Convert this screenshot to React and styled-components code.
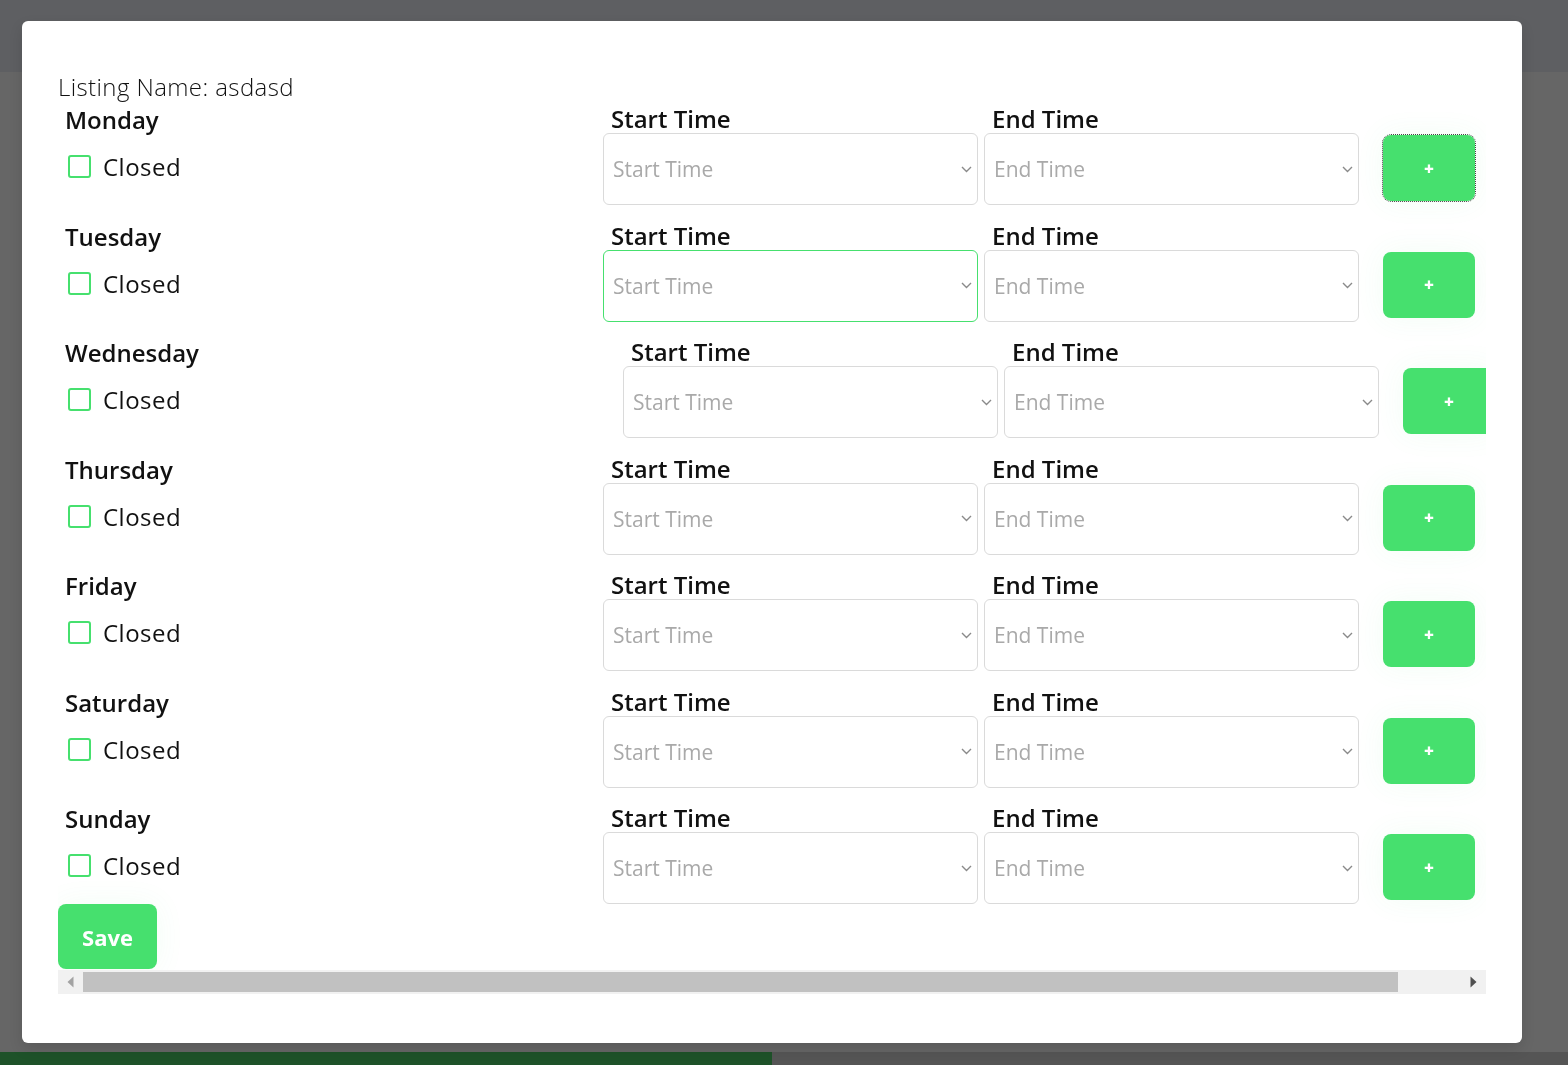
import React from 'react'
import styled, { createGlobalStyle } from 'styled-components'

const GlobalStyle = createGlobalStyle`
  *{
    margin: 0;
    padding: 0;
    box-sizing: border-box;
  }
  body{
    font-family: "Open Sans", "Liberation Sans", sans-serif;
    color: #111;
    background: #666;
  }
`

const days = [
  { name: 'Monday', focusBtn: true },
  { name: 'Tuesday', focusStart: true },
  { name: 'Wednesday', shift: true },
  { name: 'Thursday' },
  { name: 'Friday' },
  { name: 'Saturday' },
  { name: 'Sunday' },
]

const Chevron = () => (
  <svg width="11" height="7" viewBox="0 0 11 7" fill="none">
    <path d="M1 1l4.5 4.5L10 1" stroke="#8a8a8a" strokeWidth="1.4" />
  </svg>
)

const Arrow = ({ dir, color }) => (
  <svg width="7" height="12" viewBox="0 0 7 12">
    <path d={dir === 'left' ? 'M6.5 0.5L0.5 6l6 5.5z' : 'M0.5 0.5L6.5 6l-6 5.5z'} fill={color} />
  </svg>
)

const TimeSelect = ({ label, active }) => (
  <TimeField>
    <FieldLabel>{label}</FieldLabel>
    <SelectBox $active={active}>
      <Select defaultValue="">
        <option value="" disabled>{label}</option>
        <option>08:00</option>
        <option>09:00</option>
      </Select>
      <Chevron />
    </SelectBox>
  </TimeField>
)

const App = () => {
  return (
    <>
      <GlobalStyle />
      <Page>
        <Header />
        <Main />
        <Footer>
          <Progress />
        </Footer>
      </Page>
      <Overlay>
        <Modal>
          <ListingName>Listing Name: asdasd</ListingName>
          <Scroller>
            <Rows>
              {days.map((d) => (
                <Row key={d.name}>
                  <DayCell $shift={d.shift}>
                    <DayName>{d.name}</DayName>
                    <CheckLine>
                      <Check type="checkbox" />
                      <span>Closed</span>
                    </CheckLine>
                  </DayCell>
                  <TimeSelect label="Start Time" active={d.focusStart} />
                  <TimeSelect label="End Time" />
                  <AddButton $focused={d.focusBtn}>+</AddButton>
                </Row>
              ))}
            </Rows>
            <SaveButton>Save</SaveButton>
          </Scroller>
          <ScrollBar>
            <ScrollButton>
              <Arrow dir="left" color="#a3a3a3" />
            </ScrollButton>
            <ScrollTrack>
              <ScrollThumb />
            </ScrollTrack>
            <ScrollButton>
              <Arrow dir="right" color="#505050" />
            </ScrollButton>
          </ScrollBar>
        </Modal>
      </Overlay>
    </>
  )
}

const Page = styled.div`
  height: 100vh;
  display: flex;
  flex-direction: column;
`

const Header = styled.div`
  height: 72px;
  background: #5e5f62;
`

const Main = styled.div`
  flex: 1;
  background: #666;
`

const Footer = styled.div`
  height: 13px;
  background: #555;
`

const Progress = styled.div`
  width: 772px;
  height: 100%;
  background: #1e5229;
`

const Overlay = styled.div`
  position: fixed;
  inset: 0;
  padding: 21px 0 0 22px;
`

const Modal = styled.div`
  width: 1500px;
  height: 1022px;
  background: #fff;
  border-radius: 6px;
  box-shadow: 0 6px 14px rgba(0, 0, 0, 0.12);
  padding: 51px 36px 0 36px;
`

const ListingName = styled.div`
  font-size: 24px;
  line-height: 29px;
  font-weight: 300;
  letter-spacing: 0.4px;
  color: #111;
`

const Scroller = styled.div`
  margin-top: -2px;
  padding-top: 5px;
  width: 1428px;
  overflow: hidden;
`

const Rows = styled.div`
  display: flex;
  flex-direction: column;
  gap: 15.5px;
`

const Row = styled.div`
  display: flex;
  align-items: flex-start;
  width: max-content;
`

const DayCell = styled.div`
  width: ${(p) => (p.$shift ? '565px' : '545px')};
  padding-left: 7px;
  display: flex;
  flex-direction: column;
  gap: 18px;
  padding-top: 1px;
`

const DayName = styled.div`
  font-size: 24px;
  line-height: 29px;
  font-weight: 600;
`

const CheckLine = styled.label`
  display: flex;
  align-items: center;
  gap: 12px;
  padding-left: 3px;
  font-size: 24px;
  line-height: 29px;
  letter-spacing: 0.5px;
`

const Check = styled.input`
  appearance: none;
  width: 23px;
  height: 23px;
  border: 2px solid #46e06e;
  border-radius: 3px;
  background: #fff;
`

const TimeField = styled.div`
  width: 375px;
  margin-right: 6px;
  &:nth-of-type(3){
    margin-right: 0;
  }
`

const FieldLabel = styled.div`
  font-size: 24px;
  line-height: 29px;
  font-weight: 600;
  padding-left: 8px;
`

const SelectBox = styled.div`
  height: 72px;
  display: flex;
  align-items: center;
  padding: 0 5px 0 9px;
  border: 1px solid ${(p) => (p.$active ? '#46e06e' : '#dadada')};
  border-radius: 6px;
  background: #fff;
`

const Select = styled.select`
  flex: 1;
  appearance: none;
  border: none;
  outline: none;
  background: transparent;
  font-family: inherit;
  font-size: 21px;
  color: #a9a9a9;
`

const AddButton = styled.button`
  width: 92px;
  height: 66px;
  margin-top: 31px;
  margin-left: 24px;
  border: none;
  border-radius: 8px;
  background: #46e06e;
  color: #fff;
  font-family: inherit;
  font-size: 17px;
  font-weight: 800;
  cursor: pointer;
  box-shadow: 0 0 30px rgba(70, 224, 110, 0.07);
  outline: ${(p) => (p.$focused ? '1px dotted #444' : 'none')};
`

const SaveButton = styled.button`
  display: block;
  width: 99px;
  height: 65px;
  margin-bottom: 1px;
  border: none;
  border-radius: 8px;
  background: #46e06e;
  color: #fff;
  font-family: inherit;
  font-size: 22px;
  font-weight: 700;
  cursor: pointer;
  box-shadow: 0 0 30px rgba(70, 224, 110, 0.07);
`

const ScrollBar = styled.div`
  width: 1428px;
  height: 24px;
  display: flex;
  background: #f1f1f1;
`

const ScrollButton = styled.div`
  width: 25px;
  display: flex;
  align-items: center;
  justify-content: center;
`

const ScrollTrack = styled.div`
  flex: 1;
  padding: 2px 0;
`

const ScrollThumb = styled.div`
  width: 1315px;
  height: 100%;
  background: #c1c1c1;
`

export default App
